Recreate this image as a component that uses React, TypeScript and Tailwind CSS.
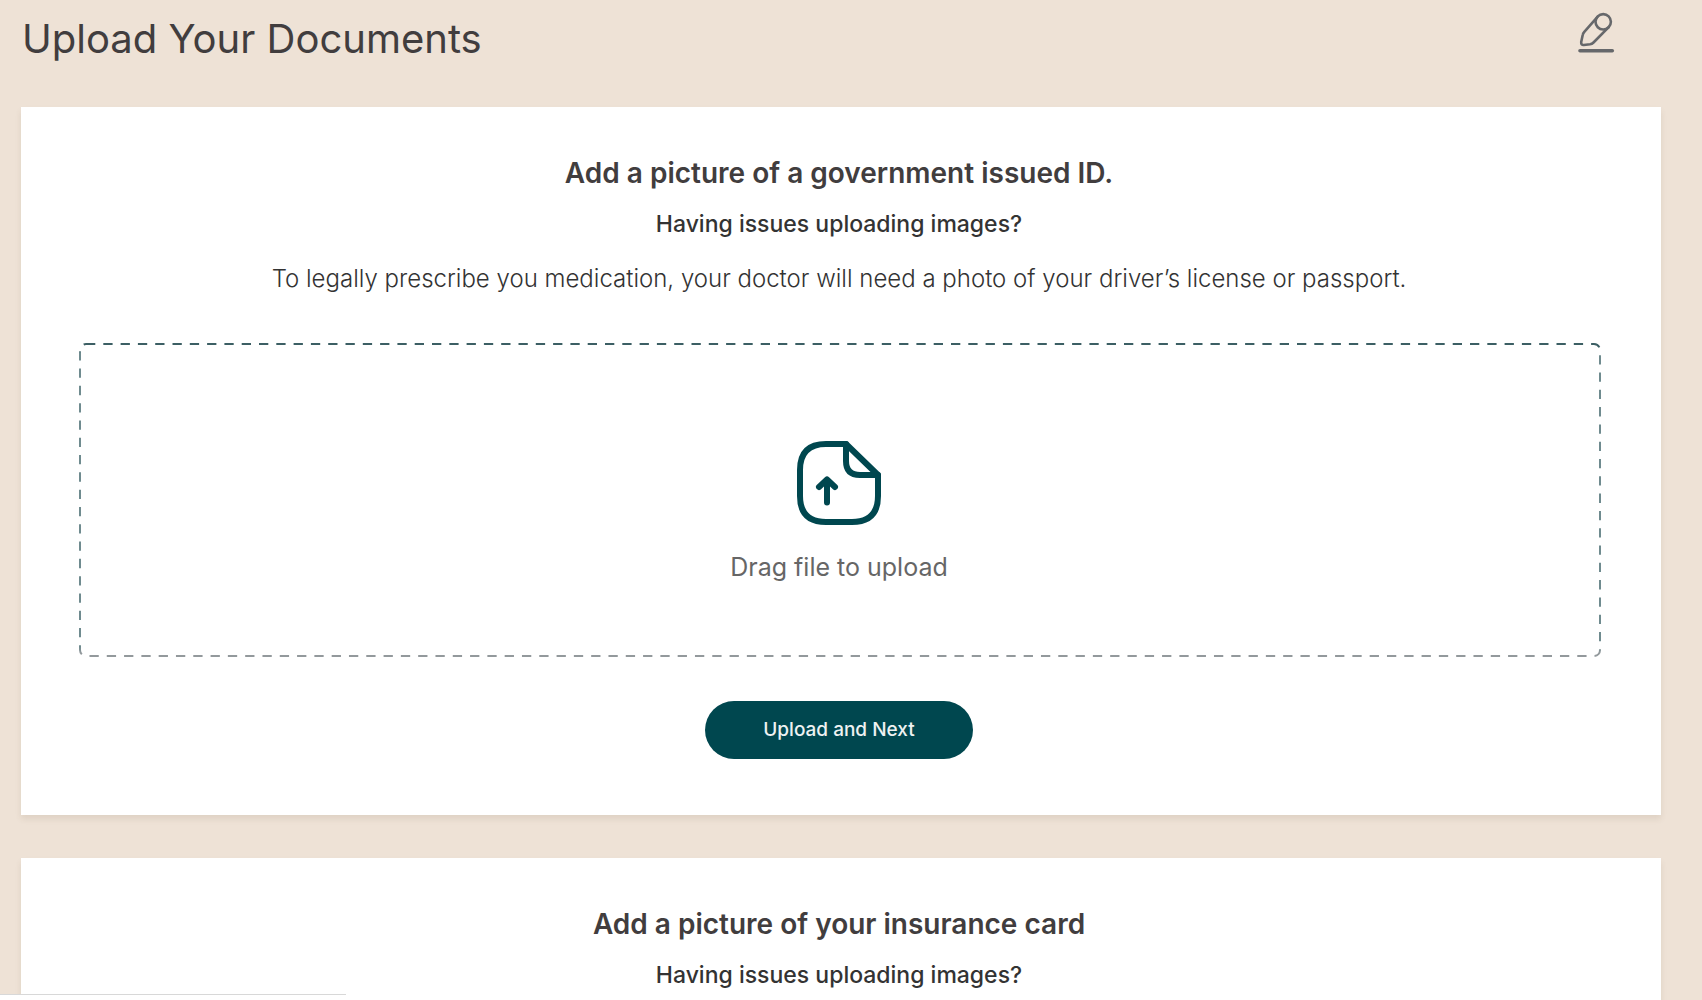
import { useId } from 'react';

const EditIcon = () => (
  <svg className="w-[38px] h-[42px]" viewBox="0 0 38 42" fill="none" stroke="#66686b" strokeWidth="2.6" strokeLinecap="round" strokeLinejoin="round">
    <path d="M19.500 4.800 6.300 19.800Q5 21.300 4.700 23L3.200 30Q3 33.200 5.800 33L12 32.300Q14 32 15.500 30.500L30.700 15.200" />
    <circle cx="25.200" cy="9.800" r="7.700" />
    <path d="M2 38.700H34.300" strokeWidth="3.600" />
  </svg>
);

const FileUploadIcon = () => (
  <svg className="w-21 h-21" viewBox="0 0 84 84" fill="none" stroke="#00474f" strokeWidth="6" strokeLinecap="round" strokeLinejoin="round">
    <path d="M49 3H29Q3 3 3 29V55Q3 81 29 81H55Q81 81 81 55V34Z" />
    <path d="M49 3V20Q49 34 63 34H81" />
    <path d="M30 61.500V39M22 46 30 38.500 38 46" />
  </svg>
);

const DashedOutline = () => {
  const strokeId = useId();

  return (
    <svg className="absolute inset-0 w-full h-full overflow-visible pointer-events-none" fill="none">
      <defs>
        <linearGradient id={strokeId} x1="0" y1="0" x2="0" y2="1">
          <stop offset="0.01" stopColor="#3c5f64" />
          <stop offset="0.03" stopColor="#6f8b8f" />
          <stop offset="0.97" stopColor="#6f8b8f" />
          <stop offset="0.99" stopColor="#93999c" />
        </linearGradient>
      </defs>
      <rect x="1" y="1" width="100%" height="100%" rx="6" stroke={`url(#${strokeId})`} strokeWidth="2" strokeDasharray="9.300 8" />
    </svg>
  );
};

type UploadCardProps = {
  id: string;
  title: string;
  description?: string;
  className?: string;
};

function UploadCard({ id, title, description, className = '' }: UploadCardProps) {
  return (
    <section className={`bg-white pl-[58px] pr-[62px] pt-12 pb-14 text-center shadow-[0_4px_6px_rgba(90,70,40,0.1)] ${className}`}>
      <h2 className="text-[28px] leading-9 font-semibold text-[#413d3e]">{title}</h2>
      <a href="#help" className="block mt-4 text-[23px] leading-[34px] font-medium text-[#333]">
        Having issues uploading images?
      </a>

      {description && (
        <>
          <p className="mt-[22px] text-2xl leading-8 font-light text-[#333]">{description}</p>

          <label htmlFor={id} className="relative mt-12 h-[312px] flex flex-col items-center justify-center gap-6 pt-7 cursor-pointer">
            <DashedOutline />
            <FileUploadIcon />
            <span className="text-[25px] leading-9 text-[#666]">Drag file to upload</span>
            <input id={id} type="file" accept="image/*" className="sr-only" />
          </label>

          <button type="button" className="mt-[46px] h-[58px] w-[268px] rounded-full bg-[#00474f] text-[19px] font-medium text-[#eef2f2]">
            Upload and Next
          </button>
        </>
      )}
    </section>
  );
}

export default function App() {
  return (
    <div className="min-h-screen flex flex-col bg-[#eee2d6] font-['Inter',sans-serif]">
      <header className="flex items-start justify-between pl-[22px] pr-[86px] pt-3 pb-[41px]">
        <h1 className="text-[40px] leading-[54px] text-[#413d3e]">Upload Your Documents</h1>
        <button type="button" aria-label="Edit documents">
          <EditIcon />
        </button>
      </header>

      <main className="flex-1 flex flex-col gap-[43px] pl-[21px] pr-[41px]">
        <UploadCard
          id="government-id"
          title="Add a picture of a government issued ID."
          description="To legally prescribe you medication, your doctor will need a photo of your driver’s license or passport."
        />
        <UploadCard id="insurance-card" title="Add a picture of your insurance card" className="flex-1 pb-2" />
      </main>

      {/* Status strip pinned to the window's bottom corner */}
      <div className="fixed bottom-0 left-0 w-[346px] h-1.5 border-t border-[#d8d8d8] bg-white" />
    </div>
  );
}
